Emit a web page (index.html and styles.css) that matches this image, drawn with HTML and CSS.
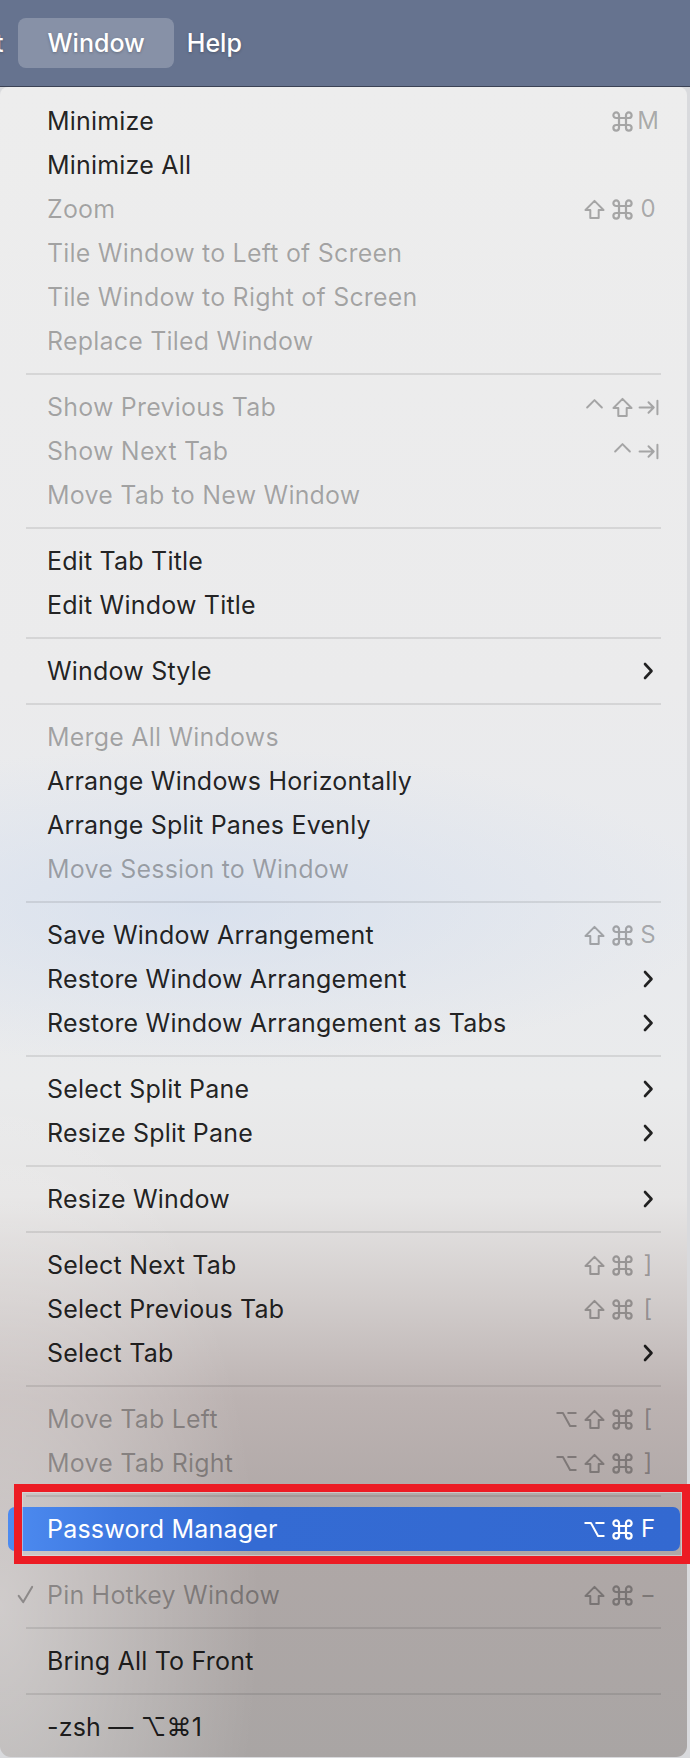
FILE: index.html
```html
<!DOCTYPE html>
<html lang="en">
<head>
<meta charset="utf-8">
<title>Window menu</title>
<link rel="stylesheet" href="styles.css">
</head>
<body>
<svg class="defs" aria-hidden="true">
  <symbol id="cmd" viewBox="1 1 18 18"><path d="M7 4.6 A2.4 2.4 0 1 0 4.6 7 H15.4 A2.4 2.4 0 1 0 13 4.6 V15.4 A2.4 2.4 0 1 0 15.4 13 H4.6 A2.4 2.4 0 1 0 7 15.4 Z"/></symbol>
  <symbol id="shift" viewBox="0 0 20 20"><path d="M10 1.8 L18.6 10.4 H14 V18.2 H6 V10.4 H1.4 Z"/></symbol>
  <symbol id="opt" viewBox="0 0 20 20"><path d="M1.2 3.8 H6.6 L13.4 16.2 H18.8 M11.6 3.8 H18.8"/></symbol>
  <symbol id="ctrl" viewBox="0 0 20 20"><path d="M3 10 L10 3 L17 10"/></symbol>
  <symbol id="tab" viewBox="0 0 20 20"><path d="M1.5 10 H15 M10 5 L15 10 L10 15 M18.5 3.5 V16.5"/></symbol>
  <symbol id="chev" viewBox="0 0 12 18"><path d="M3 2 L9.5 9 L3 16"/></symbol>
  <symbol id="check" viewBox="0 0 18 20"><path d="M1.8 11.5 L6.6 18 L16 2"/></symbol>
</svg>
<div class="menubar">
  <span class="mb-item mb-cut">t</span>
  <span class="mb-item mb-active">Window</span>
  <span class="mb-item mb-help">Help</span>
</div>
<div class="menu">
  <div class="item"><span class="label">Minimize</span><span class="sc"><span class="m"><svg class="g"><use href="#cmd"/></svg></span><span class="k">M</span></span></div>
  <div class="item"><span class="label">Minimize All</span></div>
  <div class="item dis"><span class="label">Zoom</span><span class="sc"><span class="m"><svg class="g"><use href="#shift"/></svg></span><span class="m"><svg class="g"><use href="#cmd"/></svg></span><span class="k">0</span></span></div>
  <div class="item dis"><span class="label">Tile Window to Left of Screen</span></div>
  <div class="item dis"><span class="label">Tile Window to Right of Screen</span></div>
  <div class="item dis"><span class="label">Replace Tiled Window</span></div>
  <div class="sep"></div>
  <div class="item dis"><span class="label">Show Previous Tab</span><span class="sc"><span class="m"><svg class="g"><use href="#ctrl"/></svg></span><span class="m"><svg class="g"><use href="#shift"/></svg></span><span class="k"><svg class="g"><use href="#tab"/></svg></span></span></div>
  <div class="item dis"><span class="label">Show Next Tab</span><span class="sc"><span class="m"><svg class="g"><use href="#ctrl"/></svg></span><span class="k"><svg class="g"><use href="#tab"/></svg></span></span></div>
  <div class="item dis"><span class="label">Move Tab to New Window</span></div>
  <div class="sep"></div>
  <div class="item"><span class="label">Edit Tab Title</span></div>
  <div class="item"><span class="label">Edit Window Title</span></div>
  <div class="sep"></div>
  <div class="item"><span class="label">Window Style</span><span class="sc"><span class="k"><svg class="chev"><use href="#chev"/></svg></span></span></div>
  <div class="sep"></div>
  <div class="item dis"><span class="label">Merge All Windows</span></div>
  <div class="item"><span class="label">Arrange Windows Horizontally</span></div>
  <div class="item"><span class="label">Arrange Split Panes Evenly</span></div>
  <div class="item dis"><span class="label">Move Session to Window</span></div>
  <div class="sep"></div>
  <div class="item"><span class="label">Save Window Arrangement</span><span class="sc"><span class="m"><svg class="g"><use href="#shift"/></svg></span><span class="m"><svg class="g"><use href="#cmd"/></svg></span><span class="k">S</span></span></div>
  <div class="item"><span class="label">Restore Window Arrangement</span><span class="sc"><span class="k"><svg class="chev"><use href="#chev"/></svg></span></span></div>
  <div class="item"><span class="label">Restore Window Arrangement as Tabs</span><span class="sc"><span class="k"><svg class="chev"><use href="#chev"/></svg></span></span></div>
  <div class="sep"></div>
  <div class="item"><span class="label">Select Split Pane</span><span class="sc"><span class="k"><svg class="chev"><use href="#chev"/></svg></span></span></div>
  <div class="item"><span class="label">Resize Split Pane</span><span class="sc"><span class="k"><svg class="chev"><use href="#chev"/></svg></span></span></div>
  <div class="sep"></div>
  <div class="item"><span class="label">Resize Window</span><span class="sc"><span class="k"><svg class="chev"><use href="#chev"/></svg></span></span></div>
  <div class="sep"></div>
  <div class="item"><span class="label">Select Next Tab</span><span class="sc"><span class="m"><svg class="g"><use href="#shift"/></svg></span><span class="m"><svg class="g"><use href="#cmd"/></svg></span><span class="k">]</span></span></div>
  <div class="item"><span class="label">Select Previous Tab</span><span class="sc"><span class="m"><svg class="g"><use href="#shift"/></svg></span><span class="m"><svg class="g"><use href="#cmd"/></svg></span><span class="k">[</span></span></div>
  <div class="item"><span class="label">Select Tab</span><span class="sc"><span class="k"><svg class="chev"><use href="#chev"/></svg></span></span></div>
  <div class="sep"></div>
  <div class="item dis"><span class="label">Move Tab Left</span><span class="sc"><span class="m"><svg class="g"><use href="#opt"/></svg></span><span class="m"><svg class="g"><use href="#shift"/></svg></span><span class="m"><svg class="g"><use href="#cmd"/></svg></span><span class="k">[</span></span></div>
  <div class="item dis"><span class="label">Move Tab Right</span><span class="sc"><span class="m"><svg class="g"><use href="#opt"/></svg></span><span class="m"><svg class="g"><use href="#shift"/></svg></span><span class="m"><svg class="g"><use href="#cmd"/></svg></span><span class="k">]</span></span></div>
  <div class="sep"></div>
  <div class="item hl"><span class="label">Password Manager</span><span class="sc"><span class="m"><svg class="g"><use href="#opt"/></svg></span><span class="m"><svg class="g"><use href="#cmd"/></svg></span><span class="k">F</span></span></div>
  <div class="sep"></div>
  <div class="item dis"><span class="check"><svg class="chk"><use href="#check"/></svg></span><span class="label">Pin Hotkey Window</span><span class="sc"><span class="m"><svg class="g"><use href="#shift"/></svg></span><span class="m"><svg class="g"><use href="#cmd"/></svg></span><span class="k">−</span></span></div>
  <div class="sep"></div>
  <div class="item"><span class="label">Bring All To Front</span></div>
  <div class="sep"></div>
  <div class="item"><span class="label">-zsh — ⌥⌘1</span></div>
  <div class="annot"></div>
</div>
</body>
</html>
```
FILE: styles.css
```css
html, body {
  margin: 0;
  padding: 0;
}
body {
  width: 690px;
  height: 1758px;
  overflow: hidden;
  background: #d9dadd;
  font-family: "Inter", "Noto Sans", "DejaVu Sans", sans-serif;
}
.defs {
  position: absolute;
  width: 0;
  height: 0;
  overflow: hidden;
}

/* ---------- menu bar ---------- */
.menubar {
  height: 86px;
  border-bottom: 1px solid #3b4255;
  background: #66738f;
  display: flex;
  align-items: center;
  overflow: hidden;
  color: #fff;
  font-size: 25px;
  font-weight: 500;
  text-shadow: 0 1px 3px rgba(0, 0, 0, 0.25);
}
.mb-item {
  display: flex;
  align-items: center;
}
.mb-cut {
  margin-left: -5px;
}
.mb-active {
  margin-left: 14px;
  height: 50px;
  padding: 0 29px 0 30px;
  border-radius: 8px;
  background: rgba(255, 255, 255, 0.22);
}
.mb-help {
  margin-left: 13px;
}

/* ---------- menu ---------- */
.menu {
  position: relative;
  width: 687px;
  padding: 12px 0 8px;
  border-radius: 8px 8px 11px 11px;
  background:
    radial-gradient(ellipse 260px 520px at 0 1520px, rgba(255, 255, 255, 0.42), rgba(255, 255, 255, 0) 100%),
    radial-gradient(ellipse 520px 160px at 200px 820px, rgba(205, 218, 238, 0.55), rgba(205, 218, 238, 0) 100%),
    linear-gradient(180deg,
      #ededed 0,
      #ebebec 600px,
      #e8eaee 800px,
      #eaebec 1000px,
      #e6e5e5 1110px,
      #d2cdcc 1210px,
      #bcb3b2 1310px,
      #b0a8a7 1420px,
      #a9a5a4 1671px);
  font-size: 25px;
  letter-spacing: 0.2px;
  color: rgba(0, 0, 0, 0.87);
}

.item {
  height: 44px;
  margin: 0 7px 0 8px;
  padding: 0 20px 0 39px;
  display: grid;
  grid-template-columns: 1fr auto;
  align-items: center;
  border-radius: 7px;
  position: relative;
  white-space: nowrap;
}
.item.dis {
  color: rgba(0, 0, 0, 0.31);
}
.label {
  grid-column: 1;
  line-height: 44px;
}
.sc {
  grid-column: 2;
  display: flex;
  align-items: center;
  height: 44px;
  color: rgba(0, 0, 0, 0.3);
  letter-spacing: 0;
}
.sc .m {
  width: 28px;
  display: flex;
  justify-content: center;
  align-items: center;
}
.sc .k {
  width: 24px;
  display: flex;
  justify-content: center;
  align-items: center;
  font-size: 24px;
  line-height: 44px;
}
.g {
  width: 21px;
  height: 21px;
  fill: none;
  stroke: currentColor;
  stroke-width: 1.9;
  stroke-linejoin: round;
  stroke-linecap: round;
}
.chev {
  width: 12px;
  height: 18px;
  fill: none;
  stroke: rgba(0, 0, 0, 0.86);
  stroke-width: 2.6;
  stroke-linecap: round;
  stroke-linejoin: round;
}
.check {
  position: absolute;
  left: 9px;
  top: 12px;
  display: flex;
}
.chk {
  width: 17px;
  height: 19px;
  fill: none;
  stroke: currentColor;
  stroke-width: 2.2;
  stroke-linecap: round;
  stroke-linejoin: round;
}

.item.hl {
  background: linear-gradient(90deg, #4d8bf0 0, #3e78e0 110px, #346bd3 240px, #3369d1 100%);
  color: #fff;
}
.item.hl .sc {
  color: #fff;
}

.sep {
  height: 2px;
  margin: 10px 26px 10px 26px;
  background: rgba(0, 0, 0, 0.09);
}

/* red annotation frame drawn over the highlighted item */
.annot {
  position: absolute;
  left: 14px;
  top: 1397px;
  width: 676px;
  height: 80px;
  box-sizing: border-box;
  border: 8px solid #ec1c24;
  box-shadow: inset 0 0 0 1px rgba(225, 225, 225, 0.55);
  pointer-events: none;
}
```
